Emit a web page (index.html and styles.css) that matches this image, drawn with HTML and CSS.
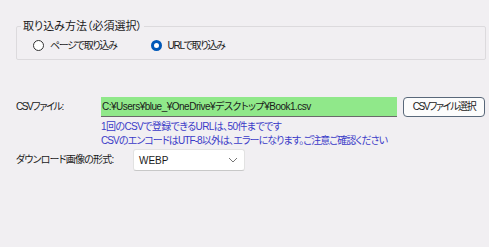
FILE: index.html
```html
<!DOCTYPE html>
<html>
<head>
  <title>CSV取り込み</title>
  <link rel="stylesheet" href="styles.css">
</head>
<body>

  <div class="panel">

    <fieldset class="mode-group">
      <legend>取り込み方法（必須選択）</legend>
      <label class="radio">
        <span class="radio-mark"></span>
        ページで取り込み
      </label>
      <label class="radio checked">
        <span class="radio-mark"></span>
        URLで取り込み
      </label>
    </fieldset>

    <div class="csv-row">
      <span class="row-label">CSVファイル:</span>
      <div class="csv-field">
        <div class="csv-path">C:¥Users¥blue_¥OneDrive¥デスクトップ¥Book1.csv</div>
        <p class="note">1回のCSVで登録できるURLは、50件までです</p>
        <p class="note tight">CSVのエンコードはUTF-8以外は、エラーになります。ご注意ご確認ください</p>
      </div>
      <button class="pick-btn">CSVファイル選択</button>
    </div>

    <div class="format-row">
      <span class="row-label wide">ダウンロード画像の形式:</span>
      <div class="select">
        <span>WEBP</span>
        <svg width="10" height="6" viewBox="0 0 10 6"><path d="M1 1 L5 5 L9 1" fill="none" stroke="#777" stroke-width="1"/></svg>
      </div>
    </div>

  </div>

</body>
</html>
```

FILE: styles.css
```css
body {
  margin: 0;
  background: #f1eff2;
  font-family: "Liberation Sans", "Noto Sans CJK JP", sans-serif;
  font-feature-settings: "palt";
  font-size: 10px;
  color: #1a1a1a;
  white-space: nowrap;
}

.panel {
  padding: 20px 3px 0 16px;
}

.mode-group {
  margin: 0;
  width: 470px;
  height: 40px;
  box-sizing: border-box;
  border: 1px solid #dcdadd;
  border-radius: 2px;
  padding: 0 0 0 16px;
  display: flex;
  align-items: center;
}

.mode-group legend {
  padding: 0 2px;
  margin-left: -12px;
  font-size: 11px;
  line-height: 12px;
}

.radio {
  display: flex;
  align-items: center;
  line-height: 14px;
  letter-spacing: -1.3px;
}

.radio + .radio {
  margin-left: 34px;
}

.radio-mark {
  width: 9px;
  height: 9px;
  border: 1px solid #333;
  border-radius: 50%;
  margin-right: 6px;
  background: #fff;
}

.radio.checked .radio-mark {
  width: 5px;
  height: 5px;
  border: 3px solid #0058b8;
}

.csv-row {
  display: flex;
  align-items: flex-start;
  margin-top: 37px;
}

.row-label {
  width: 85px;
  line-height: 20px;
  letter-spacing: -1.4px;
}

.row-label.wide {
  width: 117px;
  letter-spacing: -0.8px;
}

.csv-field {
  width: 296px;
}

.csv-path {
  height: 20px;
  box-sizing: border-box;
  background: #90e88a;
  border-bottom: 1px solid #6a6a6a;
  line-height: 19px;
  padding-left: 1px;
  letter-spacing: -0.5px;
}

.note {
  margin: 0;
  color: #3b3bc8;
  line-height: 14px;
  letter-spacing: -0.6px;
}

.note.tight {
  letter-spacing: -0.9px;
}

.note:first-of-type {
  margin-top: 3px;
}

.pick-btn {
  margin-left: 6px;
  width: 82px;
  height: 20px;
  font-family: inherit;
  font-feature-settings: "palt";
  font-size: 10px;
  letter-spacing: -1.4px;
  line-height: 16px;
  padding: 0;
  background: #fcfcfc;
  border: 1px solid #59687a;
  border-radius: 4px;
  color: #1a1a1a;
  white-space: nowrap;
}

.format-row {
  display: flex;
  align-items: center;
  margin-top: 1px;
}

.select {
  width: 112px;
  height: 22px;
  box-sizing: border-box;
  background: #fff;
  border: 1px solid #e2e2e2;
  border-bottom-color: #c8c8c8;
  border-radius: 3px;
  display: flex;
  align-items: center;
  justify-content: space-between;
  padding: 0 6px 0 5px;
}
```
